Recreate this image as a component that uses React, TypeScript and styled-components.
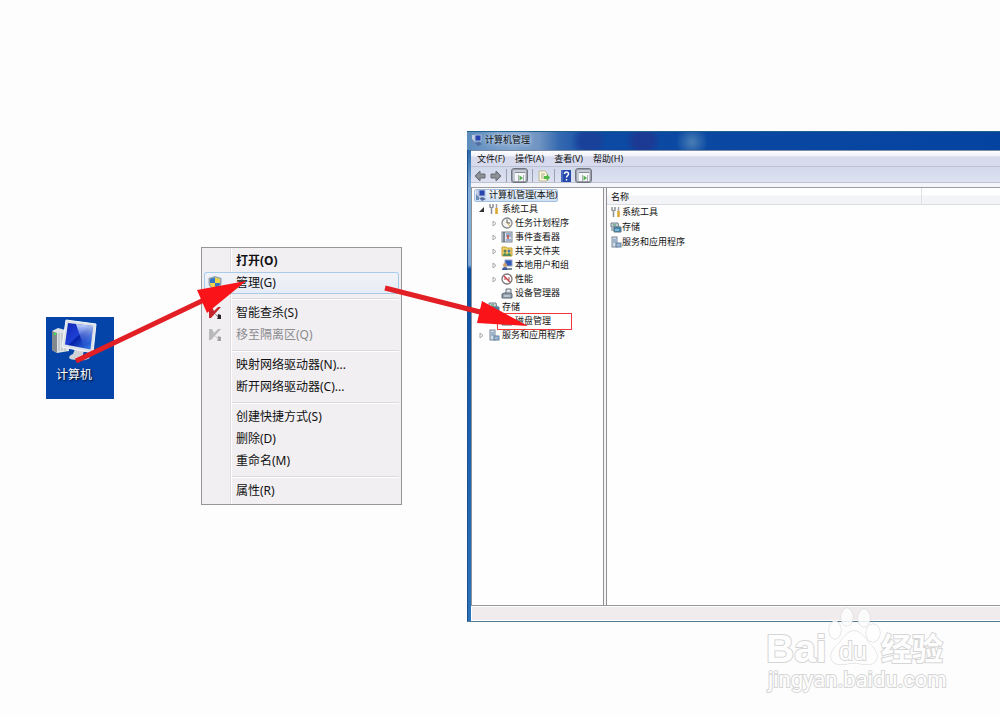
import React from 'react';
import styled, { createGlobalStyle, css } from 'styled-components';

const GlobalStyle = createGlobalStyle`
  * { box-sizing: border-box; }
  body {
    margin: 0;
    background: #fdfdfd;
    color: #111;
    font-family: "Noto Sans", "Noto Sans CJK SC", sans-serif;
  }
  button { font: inherit; color: inherit; padding: 0; margin: 0; border: 0; background: none; }
  ul { list-style: none; margin: 0; padding: 0; }
`;

const Stage = styled.main`
  position: relative;
  display: flex;
  align-items: flex-start;
  min-height: 100vh;
  padding: 131px 0 93px 46px;
  overflow: hidden;
`;

/* Desktop shortcut */
const DesktopIcon = styled.button`
  display: flex;
  flex: none;
  flex-direction: column;
  align-items: center;
  width: 68px;
  height: 82px;
  margin-top: 186px;
  padding-top: 2px;
  background: #0443a8;
  color: #fff;
  font-size: 12px;
  line-height: 18px;
  text-shadow: 1px 1px 2px #000;
`;
const DesktopLabel = styled.span`
  padding-right: 12px;
`;

/* Context menu */
const Menu = styled.div`
  flex: none;
  width: 201px;
  margin: 116px 65px 0 87px;
  padding: 2px;
  border: 1px solid #96969a;
  background: linear-gradient(90deg, #f1eff2 28px, #dedce0 28px, #dedce0 29px, #fff 29px, #fff 30px, #f1eff2 30px);
`;
const MenuItem = styled.button<{ $strong?: boolean; $hot?: boolean }>`
  display: grid;
  grid-template-columns: 31px 1fr;
  align-items: center;
  width: 100%;
  height: 22px;
  padding-left: 1px;
  font-size: 12px;
  line-height: 18px;
  text-align: left;
  white-space: nowrap;
  font-weight: ${p => (p.$strong ? 700 : 400)};
  &:disabled { color: #8b8a8e; }
  ${p => p.$hot && css`
    border-radius: 3px;
    background: linear-gradient(#f2f3f8, #e6ebf6);
    box-shadow: inset 0 0 0 1px #a9cbea;
  `}
`;
const MenuIcon = styled.span`
  display: flex;
  padding-left: 3px;
`;
const MenuRule = styled.hr`
  height: 8px;
  margin: 0 0 0 28px;
  border: 0;
  background: linear-gradient(transparent 4px, #dcdadf 4px, #dcdadf 5px, #fff 5px, #fff 6px, transparent 6px);
`;

/* Management window */
const Window = styled.section`
  display: flex;
  flex: 1;
  flex-direction: column;
  min-width: 0;
  height: 491px;
  padding-left: 4px;
  border-bottom: 1px solid #557892;
  background: linear-gradient(90deg, #1d4f8c 1px, transparent 1px),
    linear-gradient(#2d6cab 20px, #86afd9 60px, #7ba8d6 134px, #0a50a5 138px, #2b74bb 100%);
  font-size: 9px;
  line-height: 14px;
  white-space: nowrap;
`;
const TitleBar = styled.header`
  display: flex;
  align-items: center;
  gap: 2px;
  height: 19px;
  margin-left: -4px;
  padding: 0 0 2px 4px;
  border-top: 1px solid #1f5f8c;
  background:
    radial-gradient(ellipse 16px 16px at 225px 10px, #4479b4 10%, transparent),
    radial-gradient(ellipse 18px 16px at 176px 9px, #1c3a94 50%, transparent),
    radial-gradient(ellipse 18px 16px at 122px 9px, #1a4199 50%, transparent),
    linear-gradient(90deg, #5c8cbd, #7fa2cc 45px, #7094c2 72px, #3569b0 92px, #0c4aa3 130px, #0443a0);
`;
const Title = styled.h1`
  margin: 0;
  font-size: 9px;
  line-height: 14px;
  font-weight: 400;
  text-shadow: 0 0 4px #dce8f6, 0 0 6px #c4d6ec;
`;
const MenuBar = styled.nav`
  display: flex;
  align-items: center;
  gap: 10px;
  height: 17px;
  padding-left: 6px;
  border-top: 1px solid #7c8ca8;
  border-bottom: 1px solid #bcc0d2;
  background: linear-gradient(#fff, #eef1fa 5px, #d6daec 6px, #d8dbee);
`;
const Toolbar = styled.div`
  display: flex;
  align-items: center;
  gap: 3px;
  height: 21px;
  padding: 0 2px 3px;
  border-bottom: 1px solid #9b9ca0;
  background: linear-gradient(#d0d9ea, #dee1f2 15px, #bdc2cf 15px, #bdc2cf 16px, #f4f5fa 16px);
`;
const Tool = styled.button<{ $on?: boolean }>`
  display: flex;
  align-items: center;
  justify-content: center;
  width: ${p => (p.$on ? 17 : 13)}px;
  height: 15px;
  ${p => p.$on && css`
    border: 1px solid #70747e;
    border-radius: 3px;
    background: #c6cad6;
    box-shadow: inset 0 0 0 1px #9a9eaa;
  `}
`;
const ToolRule = styled.span`
  width: 1px;
  height: 13px;
  margin: 0 1px;
  background: #9aa0b2;
`;
const Panes = styled.div`
  display: grid;
  flex: 1;
  grid-template-columns: 133px 1fr;
  gap: 2px;
  min-height: 0;
  border-bottom: 1px solid #989898;
  background: #f4f4f6;
`;
const TreePane = styled.div`
  border-right: 1px solid #929296;
  border-left: 1px solid #929296;
  background: #fefefe;
`;
const Row = styled.li<{ $level: number }>`
  position: relative;
  display: flex;
  align-items: center;
  gap: 2px;
  height: 14px;
  padding-left: ${p => (p.$level ? p.$level * 13 - 9 : 2)}px;
`;
const RootLabel = styled.span`
  display: flex;
  align-items: center;
  gap: 2px;
  height: 13px;
  border: 1px solid #a2bfdf;
  border-radius: 2px;
  background: linear-gradient(#eaf2fb, #cfe0f3);
`;
const Expander = styled.button`
  display: flex;
  width: 10px;
  justify-content: center;
`;
const Highlight = styled.span`
  position: absolute;
  top: -1px;
  left: 25px;
  width: 75px;
  height: 17px;
  border: 1px solid #f5383c;
`;
const ListPane = styled.div`
  border-left: 1px solid #929296;
  background: #fefefe;
`;
const List = styled.table`
  width: 100%;
  border-collapse: collapse;
  table-layout: fixed;
  th {
    height: 16px;
    padding: 1px 0 0 4px;
    border-bottom: 1px solid #dcdce0;
    background: linear-gradient(#fff 7px, #f3f4f7 8px);
    font-weight: 400;
    line-height: 13px;
    text-align: left;
  }
  th:first-child { width: 314px; border-right: 1px solid #dfe0e4; }
  td { height: 15px; padding: 0 0 0 3px; }
`;
const Cell = styled.span`
  display: flex;
  align-items: center;
`;
const StatusBar = styled.footer`
  height: 15px;
  border: 1px solid #fff;
  border-right: 0;
  background: #f0ecee;
`;

/* Overlays on the canvas */
const Arrows = styled.svg`
  position: absolute;
  top: 270px;
  left: 60px;
  pointer-events: none;
`;
const Watermark = styled.svg`
  position: absolute;
  top: 604px;
  left: 760px;
  pointer-events: none;
`;

const Icon = ({ children, size = 12, box = 12 }: { children: React.ReactNode; size?: number; box?: number }) => (
  <svg width={size} height={size} viewBox={`0 0 ${box} ${box}`} aria-hidden="true">{children}</svg>
);

const Computer = () => (
  <svg width="56" height="47" viewBox="0 0 56 47" aria-hidden="true">
    <defs>
      <linearGradient id="scr" x1="0" y1="0" x2="1" y2="1">
        <stop offset="0" stopColor="#1226b4" /><stop offset=".45" stopColor="#1c3fd4" />
        <stop offset=".5" stopColor="#0620a8" /><stop offset="1" stopColor="#3b86ee" />
      </linearGradient>
      <linearGradient id="shine" x1="0" y1="0" x2="0" y2="1">
        <stop offset="0" stopColor="#dbe8ff" stopOpacity=".9" /><stop offset="1" stopColor="#4d7cf0" stopOpacity=".1" />
      </linearGradient>
    </defs>
    <path d="M0 12 L6 9 L17 12 L17 32 L5 34 L0 31Z" fill="#dfe2e4" />
    <path d="M0 12 L5 14 L5 34 L0 31Z" fill="#82898f" />
    <path d="M7 14v18M10 14v18M13 14v18" stroke="#aeb4b8" />
    <circle cx="3" cy="15" r="1.3" fill="#46df5d" />
    <path d="M23 30 L32 31 L31 36 L37 37 C40 40 32 42 25 41 C17 41 14 38 21 35Z" fill="#cfd3d7" />
    <path d="M14 1 L44 5 L41 34 L10 28Z" fill="#dde2e9" stroke="#f5f7f9" />
    <path d="M16 4 L41 7 L38.500 30.500 L13 25.500Z" fill="url(#scr)" />
    <path d="M24 5 L41 7 L39.500 22 L31 26Z" fill="url(#shine)" />
  </svg>
);

const Shield = () => (
  <Icon size={14} box={14}>
    <path d="M7 0 L13.500 2 V7 C13.500 11 9 13 7 14 C5 13 .5 11 .5 7 V2Z" fill="#94a6b4" />
    <path d="M7 1.500V7H2V3Z M7 7h5c0 3-3 5-5 6Z" fill="#3277c4" />
    <path d="M7 1.500V7h5V3Z M7 7H2c0 3 3 5 5 6Z" fill="#edd44a" />
  </Icon>
);
const Kill = ({ off }: { off?: boolean }) => (
  <Icon size={14} box={14}>
    <path d="M1 1h3l2 4 4-4h3L3 12H1Z" fill={off ? '#b9b8bb' : '#c3272c'} />
    <path d="M6 7l4 3V8l3 1v4H9l1-2Z" fill={off ? '#a3a2a5' : '#2c2527'} />
  </Icon>
);

const Monitor = () => (
  <Icon>
    <path d="M1 1h3v9H1z" fill="#c3cfe0" />
    <rect x="4" y="1" width="6" height="6" fill="#2746ad" stroke="#a9b8d8" />
    <path d="M1 5l3 3v3H1z" fill="#6c8bb8" />
    <path d="M4 9l4-1 3 2-4 2z" fill="#536d9e" />
  </Icon>
);
const Wrench = () => (
  <Icon>
    <path d="M2 1v3l1.500 1L5 4V1M3.500 5v6" stroke="#8d9197" strokeWidth="1.500" fill="none" />
    <path d="M8.500 1v4" stroke="#9da0a5" strokeWidth="1.500" />
    <path d="M8.500 5v6" stroke="#dfa42c" strokeWidth="2.500" />
  </Icon>
);
const Clock = () => (
  <Icon>
    <circle cx="6" cy="6" r="5" fill="#f3f4ee" stroke="#85898d" strokeWidth="1.300" />
    <path d="M6 2.500V6h3" stroke="#54585e" fill="none" />
    <path d="M6 6l3 3" stroke="#d7a648" />
  </Icon>
);
const Events = () => (
  <Icon>
    <rect x="1" y="1" width="10" height="10" fill="#dfe5ec" stroke="#77818e" />
    <path d="M3 1v10" stroke="#586472" strokeWidth="1.500" />
    <path d="M5 3h5M5 5h5M5 9h5" stroke="#5579ad" />
    <path d="M7 4v4" stroke="#cb403a" strokeWidth="1.500" />
  </Icon>
);
const Shared = () => (
  <Icon>
    <path d="M1 2h4l1 1h5v8H1Z" fill="#f0cf64" stroke="#c5a23a" />
    <circle cx="4" cy="6" r="1.500" fill="#56805d" /><circle cx="8" cy="6" r="1.500" fill="#4b78ad" />
    <path d="M2 11c0-4 4-4 4 0c0-4 4-4 4 0" fill="#4f8b59" />
  </Icon>
);
const Users = () => (
  <Icon>
    <rect x="4" y="1" width="7" height="6" fill="#3059b5" stroke="#94a4c4" />
    <circle cx="4" cy="6" r="2" fill="#d1a06a" /><path d="M1 11c0-4 6-4 6 0Z" fill="#40599b" />
    <path d="M7 9h4v2H7z" fill="#7c8999" />
  </Icon>
);
const Perf = () => (
  <Icon>
    <circle cx="6" cy="6" r="5" fill="#fff" stroke="#7e7476" strokeWidth="1.300" />
    <path d="M3 3l6 6" stroke="#ca3c42" strokeWidth="1.500" /><path d="M4 7V5M8 7V4" stroke="#a9494c" />
  </Icon>
);
const Device = () => (
  <Icon>
    <path d="M5 6V2h5v4" fill="#dfe3e7" stroke="#67727f" /><path d="M1 7l2-1h7l1 1v4H1Z" fill="#93a1ad" stroke="#5d6873" />
    <path d="M3 9h6" stroke="#e4e9ee" />
  </Icon>
);
const Storage = () => (
  <Icon>
    <path d="M1 2h7l1 4H1Z" fill="#c2ced4" stroke="#71838d" /><path d="M1 6h3v4H1z" fill="#a9b7be" />
    <path d="M4 6h7v5H4Z" fill="#3e88b6" stroke="#5c7684" />
    <path d="M5 9h4" stroke="#b9e4ef" /><path d="M3 4h3" stroke="#3f9a63" />
  </Icon>
);
const Services = () => (
  <Icon>
    <rect x="2" y="1" width="5" height="10" fill="#d0dbe5" stroke="#76889b" /><path d="M3 4h3M3 6h3" stroke="#688dae" />
    <rect x="6" y="7" width="5" height="4" fill="#98b7d5" stroke="#68809b" />
  </Icon>
);
const Disk = () => (
  <Icon>
    <path d="M1 6l2-2h7l1 2v4H1z" fill="#9ba4ac" stroke="#636c74" />
  </Icon>
);
const Nav = ({ flip }: { flip?: boolean }) => (
  <Icon>
    <path d={flip ? 'M11 6L6 1v3H1v4h5v3Z' : 'M1 6l5-5v3h5v4H6v3Z'} fill="#8d9095" stroke="#666b73" />
  </Icon>
);
const PaneIcon = () => (
  <Icon>
    <rect x="1" y="2" width="10" height="9" fill="#f5f6f8" />
    <path d="M1 2.500h10" stroke="#858a95" />
    <path d="M4.500 5v6M9.500 5v6" stroke="#a9adb6" /><path d="M5.500 5.500l3.500 2.500-3.500 2.500Z" fill="#4ead49" />
  </Icon>
);
const Export = () => (
  <Icon>
    <path d="M1 1h6l2 2v8H1Z" fill="#fbf8dc" stroke="#bab899" /><path d="M3 4h4M3 6h3M3 8h4" stroke="#a8b08c" />
    <path d="M6 6h3V4l3 3.500L9 11V9H6Z" fill="#51ba45" />
  </Icon>
);
const Help = () => (
  <Icon>
    <rect x="1" y="0" width="10" height="12" fill="#2449ad" /><path d="M2 0v12" stroke="#6f8bd0" />
    <path d="M4.500 4c0-3 4-2.500 4 0c0 1.500-2 1.500-2 3.500M6.500 9v1.500" stroke="#fff" strokeWidth="1.500" fill="none" />
  </Icon>
);

const OpenMark = () => <svg width="5" height="5" viewBox="0 0 5 5"><path d="M5 0v5H0Z" fill="#333" /></svg>;
const ClosedMark = () => <svg width="5" height="7" viewBox="0 0 5 7"><path d="M1 1l3 2.500L1 6Z" fill="#fff" stroke="#a6a6aa" /></svg>;

type Node = { label: string; icon: React.ReactNode; level: number; state?: 'open' | 'closed'; marked?: boolean };
const nodes: Node[] = [
  { label: '系统工具', icon: <Wrench />, level: 1, state: 'open' },
  { label: '任务计划程序', icon: <Clock />, level: 2, state: 'closed' },
  { label: '事件查看器', icon: <Events />, level: 2, state: 'closed' },
  { label: '共享文件夹', icon: <Shared />, level: 2, state: 'closed' },
  { label: '本地用户和组', icon: <Users />, level: 2, state: 'closed' },
  { label: '性能', icon: <Perf />, level: 2, state: 'closed' },
  { label: '设备管理器', icon: <Device />, level: 2 },
  { label: '存储', icon: <Storage />, level: 1, state: 'open' },
  { label: '磁盘管理', icon: <Disk />, level: 2, marked: true },
  { label: '服务和应用程序', icon: <Services />, level: 1, state: 'closed' },
];
const listItems = [
  { label: '系统工具', icon: <Wrench /> },
  { label: '存储', icon: <Storage /> },
  { label: '服务和应用程序', icon: <Services /> },
];

type Entry = { label: string; icon?: React.ReactNode; strong?: boolean; hot?: boolean; off?: boolean };
const groups: Entry[][] = [
  [{ label: '打开(O)', strong: true }, { label: '管理(G)', icon: <Shield />, hot: true }],
  [{ label: '智能查杀(S)', icon: <Kill /> }, { label: '移至隔离区(Q)', icon: <Kill off />, off: true }],
  [{ label: '映射网络驱动器(N)...' }, { label: '断开网络驱动器(C)...' }],
  [{ label: '创建快捷方式(S)' }, { label: '删除(D)' }, { label: '重命名(M)' }],
  [{ label: '属性(R)' }],
];

export default function App() {
  return (
    <>
      <GlobalStyle />
      <Stage>
        <DesktopIcon>
          <Computer />
          <DesktopLabel>计算机</DesktopLabel>
        </DesktopIcon>

        <Menu role="menu">
          {groups.map((group, i) => (
            <React.Fragment key={i}>
              {i > 0 && <MenuRule />}
              {group.map(e => (
                <MenuItem key={e.label} role="menuitem" $strong={e.strong} $hot={e.hot} disabled={e.off}>
                  <MenuIcon>{e.icon}</MenuIcon>
                  <span>{e.label}</span>
                </MenuItem>
              ))}
            </React.Fragment>
          ))}
        </Menu>

        <Window>
          <TitleBar>
            <Monitor />
            <Title>计算机管理</Title>
          </TitleBar>
          <MenuBar>
            {['文件(F)', '操作(A)', '查看(V)', '帮助(H)'].map(m => <button key={m}>{m}</button>)}
          </MenuBar>
          <Toolbar>
            <Tool aria-label="后退"><Nav /></Tool>
            <Tool aria-label="前进"><Nav flip /></Tool>
            <ToolRule />
            <Tool $on aria-label="控制台树"><PaneIcon /></Tool>
            <ToolRule />
            <Tool aria-label="导出列表"><Export /></Tool>
            <ToolRule />
            <Tool aria-label="帮助"><Help /></Tool>
            <Tool $on aria-label="操作窗格"><PaneIcon /></Tool>
          </Toolbar>
          <Panes>
            <TreePane>
              <ul role="tree">
                <Row $level={0} role="treeitem">
                  <RootLabel><Monitor />计算机管理(本地)</RootLabel>
                </Row>
                {nodes.map(n => (
                  <Row key={n.label} $level={n.level} role="treeitem">
                    <Expander aria-label={n.label} disabled={!n.state}>
                      {n.state === 'open' && <OpenMark />}
                      {n.state === 'closed' && <ClosedMark />}
                    </Expander>
                    {n.icon}
                    <span>{n.label}</span>
                    {n.marked && <Highlight />}
                  </Row>
                ))}
              </ul>
            </TreePane>
            <ListPane>
              <List>
                <thead><tr><th>名称</th><th aria-label="操作" /></tr></thead>
                <tbody>
                  {listItems.map(l => (
                    <tr key={l.label}><td colSpan={2}><Cell>{l.icon}{l.label}</Cell></td></tr>
                  ))}
                </tbody>
              </List>
            </ListPane>
          </Panes>
          <StatusBar />
        </Window>

        <Arrows width="480" height="100" viewBox="60 270 480 100" aria-hidden="true">
          <path d="M76 361L206 299M385 288L484 313" stroke="#e21f24" strokeWidth="5" />
          <path d="M197 290L246 281L207 313ZM482 301L528 326L477 323Z" fill="#fa1419" />
        </Arrows>

        <Watermark width="200" height="96" viewBox="760 604 200 96" fill="#fefefe" stroke="#d6d6d6" strokeWidth="2"
          fontFamily='"Liberation Sans", "Noto Sans CJK SC", sans-serif' paintOrder="stroke">
          <text x="766" y="662" fontSize="39" fontWeight="700">Bai</text>
          <g fillOpacity=".85" strokeWidth="1">
            <ellipse cx="847" cy="617" rx="6" ry="9" />
            <ellipse cx="864" cy="618" rx="6" ry="9" />
            <ellipse cx="835" cy="630" rx="6" ry="9" />
            <ellipse cx="873" cy="633" rx="7" ry="9" />
            <path d="M854 631C861 631 864 637 869 643C877 650 879 657 875 662C869 667 860 663 854 663C848 663 839 667 833 662C829 657 831 650 839 643C844 637 847 631 854 631Z" />
          </g>
          <text x="839" y="660" fontSize="25">du</text>
          <text x="881" y="660" fontSize="31" fontWeight="700">经验</text>
          <text x="768" y="687" fontSize="22" fontFamily='Roboto, sans-serif'>jingyan.baidu.com</text>
        </Watermark>
      </Stage>
    </>
  );
}
